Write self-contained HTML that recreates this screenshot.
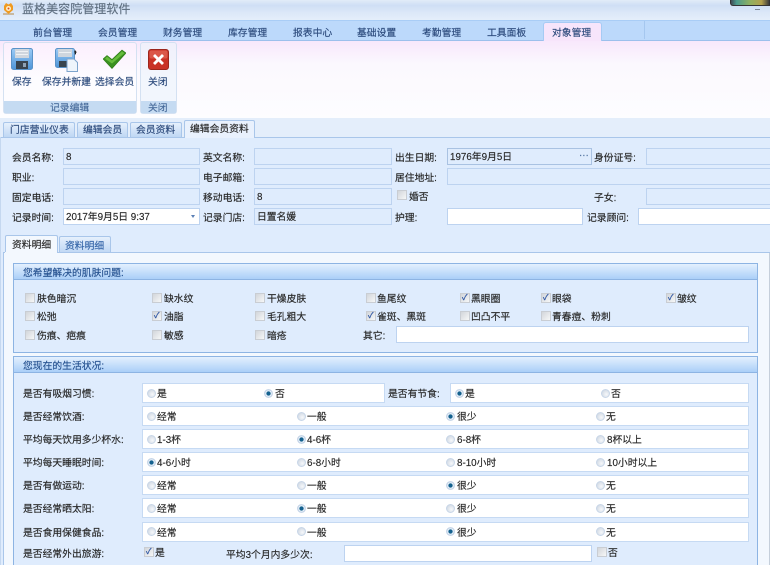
<!DOCTYPE html>
<html lang="zh"><head><meta charset="utf-8"><title>蓝格美容院管理软件</title>
<style>
html,body{margin:0;padding:0;background:#dfecfd}
#p{position:relative;width:770px;height:565px;overflow:hidden;background:#dfecfd;font-family:"Liberation Sans","Noto Sans CJK SC",sans-serif;font-size:9.8px;color:#262626;filter:blur(.38px);-webkit-text-stroke:.15px currentColor}
#p div,#p span,#p svg{position:absolute}
.t{white-space:nowrap;line-height:12px;height:12px;transform:translateY(2px)}
.b{color:#2c4a7c}
.f{box-sizing:border-box;border:1.5px solid #bdd3f0;background:#dfecfd;height:17px;line-height:17px;padding-left:2px;white-space:nowrap}
.w{background:#fff}
.r{box-sizing:border-box;border:1.5px solid #c6daf3;background:#fff;left:142px;width:607px;height:20px}
.c{box-sizing:border-box;width:9.500px;height:9.500px;border:1px solid #c9cdd3;background:linear-gradient(135deg,#d2d6da,#f6f7f8);color:#2f57a6;font-size:8px;line-height:7.500px;text-align:center;-webkit-text-stroke:.3px #2f57a6}
.o{box-sizing:border-box;width:9px;height:9px;margin:.5px 0 0 .5px;border-radius:50%;border:1px solid #c8d6e8;background:radial-gradient(circle at 62% 62%,#f6f8fb,#c8d2de)}
.s{background:radial-gradient(circle,#14618f 0 1.900px,#eef5fb 2.400px 3px,#a9c4e2 3.500px)}
.gh{left:13px;width:745px;height:17px;box-sizing:border-box;border:1px solid #8db4e3;background:linear-gradient(#e4f0fe,#aacff8);color:#24508f}
.gb{left:13px;width:745px;box-sizing:border-box;border:1px solid #8db4e3;border-top:0;background:#dfecfd}
.tab{box-sizing:border-box;border:1px solid #a9c6ea;border-bottom:0;background:linear-gradient(#e6f0fc,#bfd7f4);border-radius:2px 2px 0 0;color:#2c4a7c}
</style></head><body><div id="p">

<!-- title bar -->
<div style="left:0;top:0;width:770px;height:21px;background:linear-gradient(#e2ecf8,#cfdff5 25%,#dce8f8 60%,#e6effb)"></div>
<svg style="left:2px;top:2px" width="13" height="14" viewBox="0 0 13 14"><path d="M1 11h11v2H1z" fill="#c9b9a0"/><path d="M2 4l2-3 2.500 1.500L9 1l2 3 0 4-4.500 4L2 8z" fill="#f09a20"/><circle cx="6.500" cy="6.500" r="2.500" fill="#fff0c8"/><circle cx="6.500" cy="6.500" r="1" fill="#e0501c"/></svg>
<div class="t" style="left:22px;top:-1px;font-size:12px;line-height:16px;height:16px;color:#5f6f80;letter-spacing:.05px">蓝格美容院管理软件</div>
<div style="left:730px;top:0;width:40px;height:6px;background:linear-gradient(90deg,#3f4a55,#4a9a8c 15%,#8fb060 50%,#b2a04c 80%,#3c3c3c);border:1px solid #333;border-top:0;border-radius:0 0 0 3px;box-sizing:border-box"></div>
<div style="left:755px;top:9px;width:5px;height:1px;background:#7d8794"></div>

<!-- main tabs -->
<div style="left:0;top:20px;width:770px;height:21px;background:#bcd9fb;border-top:1px solid #a9cdf6;border-bottom:1px solid #9cc0ec;box-sizing:border-box"></div>
<div class="t b" style="left:33px;top:26px">前台管理</div>
<div class="t b" style="left:98px;top:26px">会员管理</div>
<div class="t b" style="left:163px;top:26px">财务管理</div>
<div class="t b" style="left:228px;top:26px">库存管理</div>
<div class="t b" style="left:293px;top:26px">报表中心</div>
<div class="t b" style="left:357px;top:26px">基础设置</div>
<div class="t b" style="left:422px;top:26px">考勤管理</div>
<div class="t b" style="left:487px;top:26px">工具面板</div>
<div style="left:543px;top:22px;width:59px;height:20px;box-sizing:border-box;background:#f7e5fb;border:1px solid #a6cbf4;border-bottom:0;border-radius:3px 3px 0 0"></div>
<div class="t b" style="left:552px;top:26px">对象管理</div>
<div style="left:644px;top:21px;width:1px;height:18px;background:#a5c7ef"></div>

<!-- ribbon -->
<div style="left:0;top:41px;width:770px;height:77px;background:linear-gradient(#f8e8fc,#fbf8fe 30%,#fdfdff)"></div>
<div style="left:3px;top:42px;width:134px;height:72px;box-sizing:border-box;border:1px solid #d4e1f2;border-radius:3px;background:linear-gradient(#fbeffd,#fdfcff 50%)"></div>
<div style="left:140px;top:42px;width:37px;height:72px;box-sizing:border-box;border:1px solid #d4e1f2;border-radius:3px;background:linear-gradient(#f1f0fb,#f2f6fd 50%)"></div>
<div style="left:4px;top:101px;width:132px;height:12px;background:#c5dbf2"></div>
<div style="left:141px;top:101px;width:35px;height:12px;background:#c5dbf2"></div>
<div class="t b" style="left:50px;top:101px;color:#4a6d9c">记录编辑</div>
<div class="t b" style="left:148px;top:101px;color:#4a6d9c">关闭</div>

<svg style="left:11px;top:48px" width="22" height="23" viewBox="0 0 22 23"><defs><linearGradient id="fb" x1="0" y1="0" x2="0" y2="1"><stop offset="0" stop-color="#9ccbf5"/><stop offset="1" stop-color="#4e95d8"/></linearGradient></defs><rect x=".5" y=".5" width="21" height="21" rx="2" fill="url(#fb)" stroke="#5b93c8"/><rect x="4" y="1" width="14" height="9" fill="#cfd6de"/><rect x="5" y="3" width="12" height="1" fill="#eef1f4"/><rect x="5" y="6" width="12" height="1" fill="#eef1f4"/><rect x="5" y="13" width="12" height="8" fill="#39444e"/><rect x="12" y="15" width="3" height="4" fill="#8fa2b4"/></svg>
<svg style="left:55px;top:48px" width="24" height="25" viewBox="0 0 24 25"><rect x=".5" y=".5" width="19" height="19" rx="2" fill="url(#fb)" stroke="#5b93c8"/><rect x="3" y="1" width="14" height="8" fill="#cfd6de"/><rect x="4" y="4" width="12" height="1" fill="#eef1f4"/><rect x="4" y="13" width="11" height="6" fill="#39444e"/><path d="M12 11h7l3.500 3.500V23.500H12z" fill="#eef4fb" stroke="#7ea4cc"/><path d="M20 2l2 2.500-1 0v2l-2-.5 1-.5V4.500h-1z" fill="#222"/></svg>
<svg style="left:103px;top:49px" width="23" height="21" viewBox="0 0 23 21"><path d="M0 10l4-3.500L9 10.500 19 1l4 3L9 19.500z" fill="#3a9120" stroke="#2c7a14" stroke-width=".6"/><path d="M4 7.500L9 11.500 19 2.300l2.500 1.800L9 14.500 2 9.800z" fill="#66bd3c"/></svg>
<svg style="left:148px;top:49px" width="21" height="21" viewBox="0 0 21 21"><rect x=".5" y=".5" width="20" height="20" rx="2.500" fill="#c93226" stroke="#9c261c"/><rect x="1.500" y="1.500" width="18" height="8" rx="2" fill="#e87060" opacity=".6"/><path d="M5 7l2-2 3.500 3.500L14 5l2 2-3.500 3.500L16 14l-2 2-3.500-3.500L7 16l-2-2 3.500-3.500z" fill="#fff"/></svg>

<div class="t b" style="left:12px;top:75px">保存</div>
<div class="t b" style="left:42px;top:75px">保存并新建</div>
<div class="t b" style="left:95px;top:75px">选择会员</div>
<div class="t b" style="left:148px;top:75px">关闭</div>

<!-- doc tabs -->
<div style="left:0;top:118px;width:770px;height:19px;background:#e4eefb"></div>
<div class="tab" style="left:3px;top:122px;width:72px;height:15px"></div>
<div class="tab" style="left:77px;top:122px;width:51px;height:15px"></div>
<div class="tab" style="left:130px;top:122px;width:52px;height:15px"></div>
<div class="tab" style="left:184px;top:120px;width:71px;height:18px;background:#e9f1fd"></div>
<div class="t b" style="left:10px;top:123px">门店营业仪表</div>
<div class="t b" style="left:83px;top:123px">编辑会员</div>
<div class="t b" style="left:136px;top:123px">会员资料</div>
<div class="t" style="left:190px;top:122px">编辑会员资料</div>
<div style="left:0;top:137px;width:184px;height:1px;background:#a9c6ea"></div>
<div style="left:255px;top:137px;width:515px;height:1px;background:#a9c6ea"></div>

<!-- form -->
<div class="t" style="left:12px;top:151px">会员名称:</div><div class="f" style="left:63px;top:148px;width:137px">8</div>
<div class="t" style="left:203px;top:151px">英文名称:</div><div class="f" style="left:254px;top:148px;width:138px"></div>
<div class="t" style="left:395px;top:151px">出生日期:</div><div class="f" style="left:447px;top:148px;width:145px;border-color:#a9c2e2">1976年9月5日</div>
<div class="t" style="left:579px;top:148px;color:#4a6d9c">···</div>
<div class="t" style="left:594px;top:151px">身份证号:</div><div class="f" style="left:646px;top:148px;width:130px"></div>

<div class="t" style="left:12px;top:171px">职业:</div><div class="f" style="left:63px;top:168px;width:137px"></div>
<div class="t" style="left:203px;top:171px">电子邮箱:</div><div class="f" style="left:254px;top:168px;width:138px"></div>
<div class="t" style="left:395px;top:171px">居住地址:</div><div class="f" style="left:447px;top:168px;width:330px"></div>

<div class="t" style="left:12px;top:191px">固定电话:</div><div class="f" style="left:63px;top:188px;width:137px"></div>
<div class="t" style="left:203px;top:191px">移动电话:</div><div class="f" style="left:254px;top:188px;width:138px">8</div>
<div class="c" style="left:397px;top:190px"></div><div class="t" style="left:409px;top:190px">婚否</div>
<div class="t" style="left:594px;top:191px">子女:</div><div class="f" style="left:646px;top:188px;width:130px"></div>

<div class="t" style="left:12px;top:211px">记录时间:</div><div class="f w" style="left:63px;top:208px;width:137px">2017年9月5日 9:37</div>
<div style="left:191px;top:215px;width:0;height:0;border:2.500px solid transparent;border-top:3px solid #5a7fb5"></div>
<div class="t" style="left:203px;top:211px">记录门店:</div><div class="f" style="left:254px;top:208px;width:138px">日置名媛</div>
<div class="t" style="left:395px;top:211px">护理:</div><div class="f w" style="left:447px;top:208px;width:136px"></div>
<div class="t" style="left:587px;top:211px">记录顾问:</div><div class="f w" style="left:638px;top:208px;width:140px"></div>

<!-- left edge of outer panel -->
<div style="left:0;top:137px;width:1px;height:428px;background:#c5d8f0"></div>

<!-- inner tabs -->
<div class="tab" style="left:59px;top:236px;width:52px;height:17px"></div>
<div class="t" style="left:65px;top:239px;color:#3565a8">资料明细</div>
<div class="tab" style="left:5px;top:235px;width:53px;height:18px;background:#f3f8fe"></div>
<div class="t" style="left:12px;top:238px">资料明细</div>
<div style="left:3px;top:252px;width:767px;height:313px;box-sizing:border-box;background:#f3f8fe;border-left:1px solid #a9c6ea;border-top:1px solid #a9c6ea"></div>
<div style="left:5px;top:252px;width:52px;height:2px;background:#f3f8fe"></div>
<div style="left:769px;top:253px;width:1px;height:312px;background:#c5cfdb"></div>

<!-- skin box -->
<div class="gh" style="top:263px"></div>
<div class="gb" style="top:280px;height:73px"></div>
<div class="t" style="left:23px;top:266px;color:#24508f">您希望解决的肌肤问题:</div>

<div class="c" style="left:25px;top:293px"></div><div class="t" style="left:37px;top:292px">肤色暗沉</div>
<div class="c" style="left:152px;top:293px"></div><div class="t" style="left:164px;top:292px">缺水纹</div>
<div class="c" style="left:255px;top:293px"></div><div class="t" style="left:267px;top:292px">干燥皮肤</div>
<div class="c" style="left:366px;top:293px"></div><div class="t" style="left:377px;top:292px">鱼尾纹</div>
<div class="c" style="left:460px;top:293px">✓</div><div class="t" style="left:471px;top:292px">黑眼圈</div>
<div class="c" style="left:541px;top:293px">✓</div><div class="t" style="left:552px;top:292px">眼袋</div>
<div class="c" style="left:666px;top:293px">✓</div><div class="t" style="left:677px;top:292px">皱纹</div>

<div class="c" style="left:25px;top:311px"></div><div class="t" style="left:37px;top:310px">松弛</div>
<div class="c" style="left:152px;top:311px">✓</div><div class="t" style="left:164px;top:310px">油脂</div>
<div class="c" style="left:255px;top:311px"></div><div class="t" style="left:267px;top:310px">毛孔粗大</div>
<div class="c" style="left:366px;top:311px">✓</div><div class="t" style="left:377px;top:310px">雀斑、黑斑</div>
<div class="c" style="left:460px;top:311px"></div><div class="t" style="left:471px;top:310px">凹凸不平</div>
<div class="c" style="left:541px;top:311px"></div><div class="t" style="left:552px;top:310px">青春痘、粉刺</div>

<div class="c" style="left:25px;top:330px"></div><div class="t" style="left:37px;top:329px">伤痕、疤痕</div>
<div class="c" style="left:152px;top:330px"></div><div class="t" style="left:164px;top:329px">敏感</div>
<div class="c" style="left:255px;top:330px"></div><div class="t" style="left:267px;top:329px">暗疮</div>
<div class="t" style="left:363px;top:329px">其它:</div>
<div class="f w" style="left:396px;top:326px;width:353px"></div>

<!-- life box -->
<div class="gh" style="top:356px"></div>
<div class="gb" style="top:373px;height:200px"></div>
<div class="t" style="left:23px;top:359px;color:#24508f">您现在的生活状况:</div>

<!-- row 1 -->
<div class="t" style="left:23px;top:387px">是否有吸烟习惯:</div>
<div class="r" style="top:383px;width:243px"></div>
<div class="o" style="left:146px;top:388px"></div><div class="t" style="left:157px;top:387px">是</div>
<div class="o s" style="left:263px;top:388px"></div><div class="t" style="left:275px;top:387px">否</div>
<div class="t" style="left:388px;top:387px">是否有节食:</div>
<div class="r" style="top:383px;left:450px;width:299px"></div>
<div class="o s" style="left:454px;top:388px"></div><div class="t" style="left:465px;top:387px">是</div>
<div class="o" style="left:600px;top:388px"></div><div class="t" style="left:611px;top:387px">否</div>

<!-- row 2 -->
<div class="t" style="left:23px;top:410px">是否经常饮酒:</div>
<div class="r" style="top:406px"></div>
<div class="o" style="left:146px;top:411px"></div><div class="t" style="left:157px;top:410px">经常</div>
<div class="o" style="left:296px;top:411px"></div><div class="t" style="left:307px;top:410px">一般</div>
<div class="o s" style="left:445px;top:411px"></div><div class="t" style="left:457px;top:410px">很少</div>
<div class="o" style="left:595px;top:411px"></div><div class="t" style="left:606px;top:410px">无</div>

<!-- row 3 -->
<div class="t" style="left:23px;top:433px">平均每天饮用多少杯水:</div>
<div class="r" style="top:429px"></div>
<div class="o" style="left:146px;top:434px"></div><div class="t" style="left:157px;top:433px">1-3杯</div>
<div class="o s" style="left:296px;top:434px"></div><div class="t" style="left:307px;top:433px">4-6杯</div>
<div class="o" style="left:445px;top:434px"></div><div class="t" style="left:457px;top:433px">6-8杯</div>
<div class="o" style="left:595px;top:434px"></div><div class="t" style="left:607px;top:433px">8杯以上</div>

<!-- row 4 -->
<div class="t" style="left:23px;top:456px">平均每天睡眠时间:</div>
<div class="r" style="top:452px"></div>
<div class="o s" style="left:146px;top:457px"></div><div class="t" style="left:157px;top:456px">4-6小时</div>
<div class="o" style="left:296px;top:457px"></div><div class="t" style="left:307px;top:456px">6-8小时</div>
<div class="o" style="left:445px;top:457px"></div><div class="t" style="left:457px;top:456px">8-10小时</div>
<div class="o" style="left:595px;top:457px"></div><div class="t" style="left:607px;top:456px">10小时以上</div>

<!-- row 5 -->
<div class="t" style="left:23px;top:479px">是否有做运动:</div>
<div class="r" style="top:475px"></div>
<div class="o" style="left:146px;top:480px"></div><div class="t" style="left:157px;top:479px">经常</div>
<div class="o" style="left:296px;top:480px"></div><div class="t" style="left:307px;top:479px">一般</div>
<div class="o s" style="left:445px;top:480px"></div><div class="t" style="left:457px;top:479px">很少</div>
<div class="o" style="left:595px;top:480px"></div><div class="t" style="left:606px;top:479px">无</div>

<!-- row 6 -->
<div class="t" style="left:23px;top:502px">是否经常晒太阳:</div>
<div class="r" style="top:498px"></div>
<div class="o" style="left:146px;top:503px"></div><div class="t" style="left:157px;top:502px">经常</div>
<div class="o s" style="left:296px;top:503px"></div><div class="t" style="left:307px;top:502px">一般</div>
<div class="o" style="left:445px;top:503px"></div><div class="t" style="left:457px;top:502px">很少</div>
<div class="o" style="left:595px;top:503px"></div><div class="t" style="left:606px;top:502px">无</div>

<!-- row 7 -->
<div class="t" style="left:23px;top:526px">是否食用保健食品:</div>
<div class="r" style="top:522px"></div>
<div class="o" style="left:146px;top:526px"></div><div class="t" style="left:157px;top:526px">经常</div>
<div class="o" style="left:296px;top:526px"></div><div class="t" style="left:307px;top:526px">一般</div>
<div class="o s" style="left:445px;top:526px"></div><div class="t" style="left:457px;top:526px">很少</div>
<div class="o" style="left:595px;top:526px"></div><div class="t" style="left:606px;top:526px">无</div>

<!-- row 8 -->
<div class="t" style="left:23px;top:547px">是否经常外出旅游:</div>
<div class="c" style="left:144px;top:547px">✓</div><div class="t" style="left:155px;top:546px">是</div>
<div class="t" style="left:226px;top:548px">平均3个月内多少次:</div>
<div class="f w" style="left:344px;top:545px;width:248px"></div>
<div class="c" style="left:597px;top:547px"></div><div class="t" style="left:608px;top:546px">否</div>

</div></body></html>
